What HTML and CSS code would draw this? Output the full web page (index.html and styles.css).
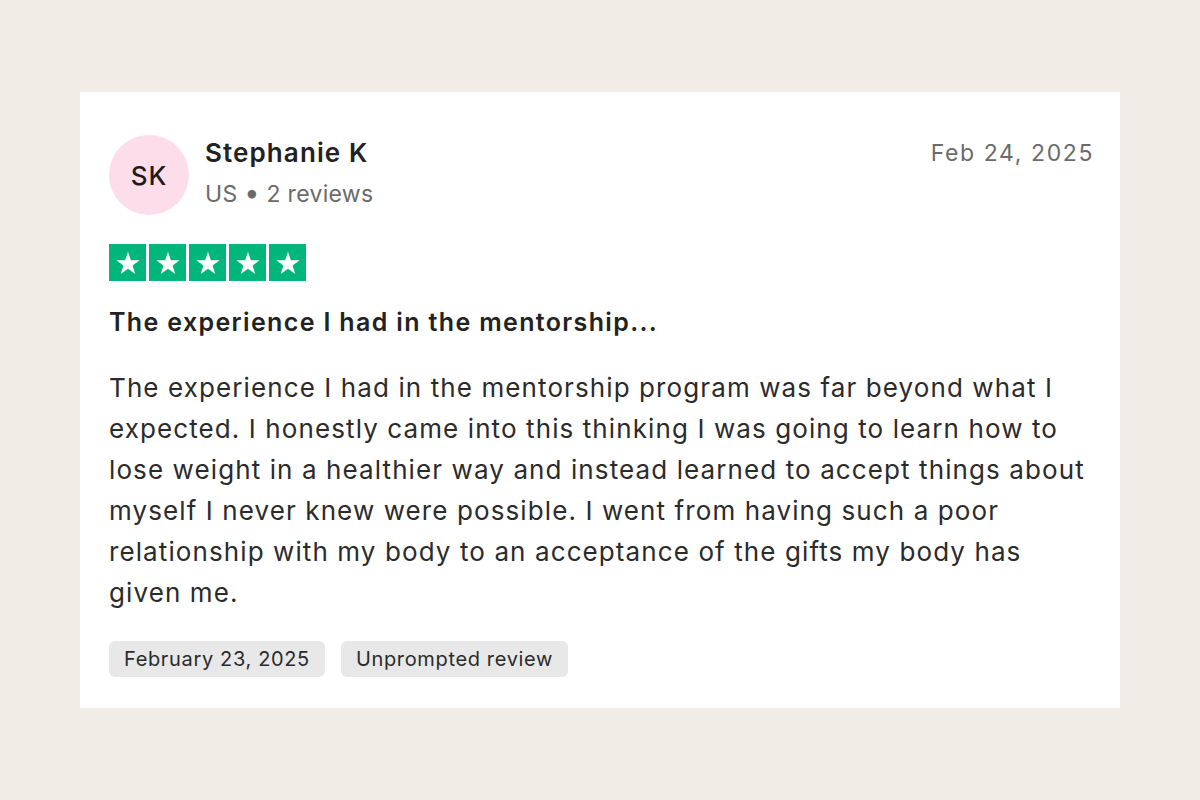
FILE: index.html
```html
<!DOCTYPE html>
<html>
<head>
<meta charset="utf-8">
<link rel="stylesheet" href="styles.css">
</head>
<body>
<div class="page">
  <div class="card">
    <div class="header">
      <div class="avatar">SK</div>
      <div class="who">
        <div class="name">Stephanie K</div>
        <div class="meta">US <span class="dot">•</span> 2 reviews</div>
      </div>
      <div class="date">Feb 24, 2025</div>
    </div>
    <div class="stars">
      <span class="star"><svg viewBox="0 0 24 24"><path d="M12 3.2l2.3 6.6h7l-5.6 4.2 2.1 6.7L12 16.6l-5.8 4.1 2.1-6.7-5.6-4.2h7z" fill="#fff"/></svg></span>
      <span class="star"><svg viewBox="0 0 24 24"><path d="M12 3.2l2.3 6.6h7l-5.6 4.2 2.1 6.7L12 16.6l-5.8 4.1 2.1-6.7-5.6-4.2h7z" fill="#fff"/></svg></span>
      <span class="star"><svg viewBox="0 0 24 24"><path d="M12 3.2l2.3 6.6h7l-5.6 4.2 2.1 6.7L12 16.6l-5.8 4.1 2.1-6.7-5.6-4.2h7z" fill="#fff"/></svg></span>
      <span class="star"><svg viewBox="0 0 24 24"><path d="M12 3.2l2.3 6.6h7l-5.6 4.2 2.1 6.7L12 16.6l-5.8 4.1 2.1-6.7-5.6-4.2h7z" fill="#fff"/></svg></span>
      <span class="star"><svg viewBox="0 0 24 24"><path d="M12 3.2l2.3 6.6h7l-5.6 4.2 2.1 6.7L12 16.6l-5.8 4.1 2.1-6.7-5.6-4.2h7z" fill="#fff"/></svg></span>
    </div>
    <h2 class="title">The experience I had in the mentorship...</h2>
    <p class="body">The experience I had in the mentorship program was far beyond what I expected. I honestly came into this thinking I was going to learn how to lose weight in a healthier way and instead learned to accept things about myself I never knew were possible. I went from having such a poor relationship with my body to an acceptance of the gifts my body has given me.</p>
    <div class="tags">
      <span class="tag">February 23, 2025</span>
      <span class="tag">Unprompted review</span>
    </div>
  </div>
</div>
</body>
</html>
```
FILE: styles.css
```css
* { box-sizing: border-box; }
html, body { margin: 0; padding: 0; }
body {
  background: #f1ece6;
  font-family: Inter, "Noto Sans", sans-serif;
  color: #1f1f1f;
  width: 1200px;
  height: 800px;
}
.page {
  padding: 92px 80px 0 80px;
}
.card {
  background: #fff;
  height: 616px;
  padding: 43px 26px 0 29px;
}
.header {
  display: flex;
  align-items: flex-start;
}
.avatar {
  width: 80px;
  height: 80px;
  border-radius: 50%;
  background: #fdddea;
  display: flex;
  align-items: center;
  justify-content: center;
  font-size: 26px;
  font-weight: 500;
  letter-spacing: 1px;
  color: #1b1b1b;
  flex: none;
}
.who {
  margin-left: 16px;
  flex: 1;
  padding-top: 2px;
}
.name {
  font-size: 26px;
  font-weight: 600;
  letter-spacing: 1.1px;
  line-height: 32px;
  color: #222;
}
.meta {
  font-size: 23px;
  letter-spacing: 0.3px;
  line-height: 32px;
  margin-top: 9px;
  color: #6b6b6b;
}
.dot {
  font-size: 27px;
  line-height: 20px;
}
.date {
  font-size: 23px;
  letter-spacing: 1.6px;
  line-height: 32px;
  color: #6b6b6b;
  padding-top: 2px;
}
.stars {
  display: flex;
  gap: 3px;
  margin-top: 29px;
}
.star {
  width: 37px;
  height: 37px;
  background: #00b67a;
  display: flex;
  align-items: center;
  justify-content: center;
}
.star svg { width: 30px; height: 30px; }
.title {
  font-size: 25px;
  font-weight: 600;
  letter-spacing: 1.35px;
  line-height: 30px;
  margin: 26px 0 0 0;
  color: #222;
}
.body {
  font-size: 26px;
  letter-spacing: 1.1px;
  line-height: 41px;
  margin: 30px 0 0 0;
  color: #2b2b2b;
}
.tags {
  display: flex;
  gap: 16px;
  margin-top: 28px;
}
.tag {
  background: #e8e8e8;
  border-radius: 6px;
  font-size: 20px;
  letter-spacing: 0.65px;
  line-height: 36px;
  padding: 0 15px;
  color: #2b2b2b;
}
```
